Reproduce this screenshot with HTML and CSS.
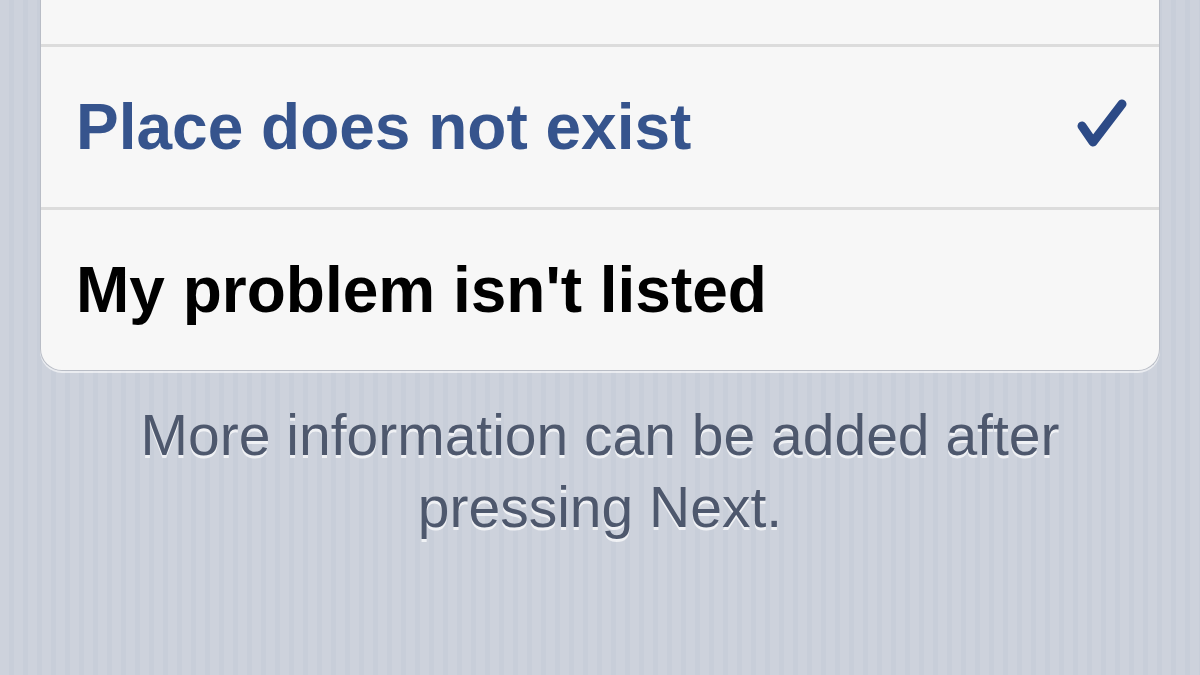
FILE: index.html
```html
<!DOCTYPE html>
<html lang="en">
<head>
    <meta charset="UTF-8">
    <meta name="viewport" content="width=device-width, initial-scale=1.0">
    <title>Report a Problem</title>
    <link rel="stylesheet" href="styles.css">
</head>
<body>
    <main class="screen">
        <!-- Grouped list of problem types -->
        <ul class="group">
            <li class="row"></li>
            <li class="row selected">
                <span class="label">Place does not exist</span>
                <svg class="check" width="50" height="54" viewBox="0 0 50 54">
                    <path d="M5 30 L16 46 L45 8" fill="none" stroke="#2c4a86" stroke-width="9" stroke-linecap="round" stroke-linejoin="round"/>
                </svg>
            </li>
            <li class="row">
                <span class="label">My problem isn't listed</span>
            </li>
        </ul>

        <p class="footer-note">More information can be added after<br>pressing Next.</p>
    </main>
</body>
</html>
```

FILE: styles.css
```css
body {
    margin: 0;
    padding: 0;
    height: 675px;
    overflow: hidden;
    font-family: 'Liberation Sans', Arial, sans-serif;
    background-color: #cdd2dc;
    /* iOS pinstripe background */
    background-image: repeating-linear-gradient(90deg,
        #cdd2dc 0px, #cdd2dc 9px,
        #c8ced9 9px, #c8ced9 14px);
}

.screen {
    padding: 0 40px;
}

.group {
    list-style: none;
    margin: -116px 0 0 0;
    padding: 0;
    background: #f7f7f7;
    border: 1px solid #b9bdc6;
    border-top: none;
    border-radius: 0 0 22px 22px;
    box-shadow: 0 2px 0 rgba(255, 255, 255, 0.6);
    overflow: hidden;
}

.row {
    height: 163px;
    display: flex;
    align-items: center;
    justify-content: space-between;
    padding: 0 30px 0 35px;
    box-sizing: border-box;
    border-bottom: 3px solid #dcdcdc;
}

.row:last-child {
    border-bottom: none;
    height: 160px;
}

.label {
    font-size: 64px;
    font-weight: bold;
    color: #000;
}

.selected .label {
    color: #36548d;
}

.check {
    display: block;
    margin: 0 2px 8px 0;
}

.footer-note {
    margin: 28px 0 0 0;
    text-align: center;
    font-size: 57px;
    line-height: 72px;
    color: #4e586d;
    text-shadow: 0 3px 0 rgba(255, 255, 255, 0.7);
}
```
